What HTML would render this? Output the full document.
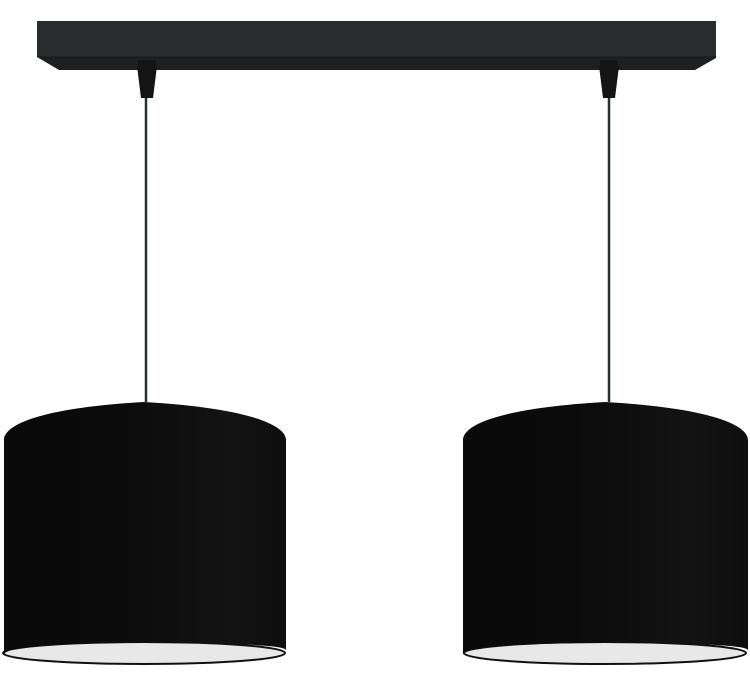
<!DOCTYPE html>
<html><head><style>
html,body{margin:0;padding:0;background:#fff;width:750px;height:684px;overflow:hidden}
</style></head><body>
<svg width="750" height="684" viewBox="0 0 750 684" xmlns="http://www.w3.org/2000/svg">
<defs>
<linearGradient id="sh" x1="0" x2="1" y1="0" y2="0">
<stop offset="0" stop-color="#0a0a0a"/>
<stop offset="0.4" stop-color="#0b0b0b"/>
<stop offset="0.8" stop-color="#131313"/>
<stop offset="1" stop-color="#0e0e0e"/>
</linearGradient>
</defs>
<polygon points="37,21 716,21 716,58 695,70 59,70 37,57" fill="#1e1f20"/>
<rect x="37" y="21" width="679" height="36" fill="#2a2b2c"/>
<line x1="37" y1="57" x2="716" y2="57" stroke="#1a1a1a" stroke-width="1"/>
<g fill="#141414">
<rect x="138" y="60" width="18" height="6" rx="2"/>
<polygon points="137,66 157,66 153,98 141,98"/>
<rect x="600" y="60" width="18" height="6" rx="2"/>
<polygon points="599,66 619,66 615,98 603,98"/>
</g>
<line x1="146" y1="98" x2="146" y2="402" stroke="#2a302c" stroke-width="2.5"/>
<line x1="609" y1="98" x2="609" y2="402" stroke="#2a302c" stroke-width="2.5"/>
<ellipse cx="144" cy="653" rx="141" ry="11" fill="#e8e8e8" stroke="#111" stroke-width="2"/>
<path d="M4,440 C4,425 40,408 144,402 C248,408 286,425 286,440 L286,650 Q284,643 144,643 Q4,643 4,655 Z" fill="url(#sh)"/>
<ellipse cx="605" cy="653" rx="141" ry="11" fill="#e8e8e8" stroke="#111" stroke-width="2"/>
<path d="M463,440 C463,425 500,408 605,402 C710,408 748,425 748,440 L748,650 Q746,643 605,643 Q463,643 463,655 Z" fill="url(#sh)"/>
</svg>
</body></html>
